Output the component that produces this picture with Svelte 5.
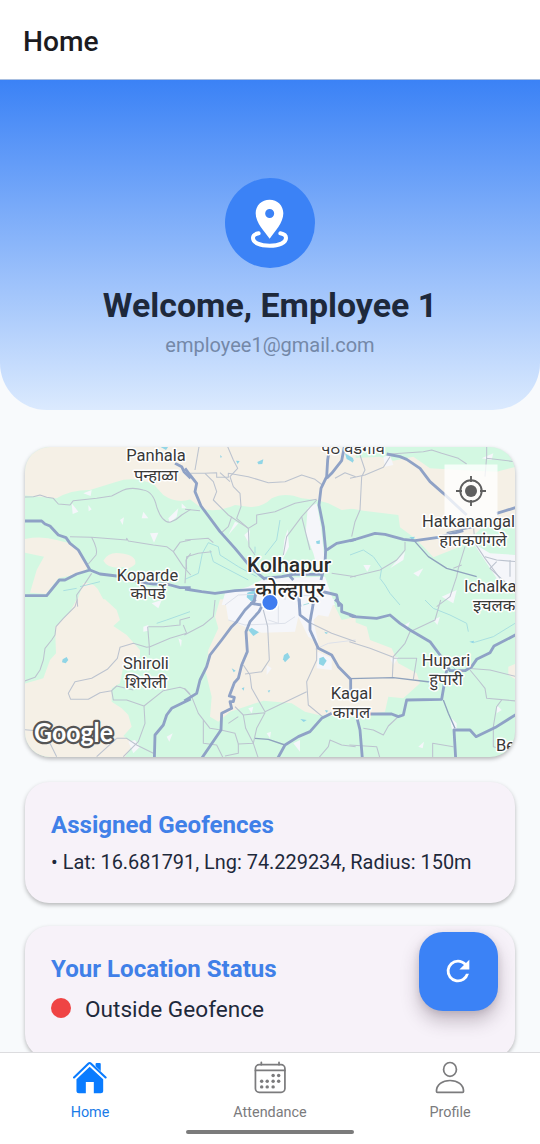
<script>
  const tabs = [
    { id: 'home', label: 'Home' },
    { id: 'attendance', label: 'Attendance' },
    { id: 'profile', label: 'Profile' }
  ];
  let active = $state('home');

  const geofences = [{ lat: '16.681791', lng: '74.229234', radius: 150 }];

  // The map is drawn as six tiles, each at three units per pixel.
  const tiles = [
    {
      x: 20, y: 440,
      land: [
        'M0 0H512V178Q470 192 430 165L400 132Q340 108 290 125L210 150Q150 150 110 175L0 165Z',
        'M0 300Q60 285 110 300L150 310Q190 340 205 380L190 398L115 415L78 462L30 458L50 390L72 350L0 335Z',
        'M250 362Q265 335 300 340Q350 345 346 372Q330 390 310 382Q265 388 250 362Z',
        'M190 430Q225 425 240 460L262 500H165Z'
      ],
      town: ['M155 190L175 215L158 222Z', 'M205 195L215 208L206 214Z', 'M300 240L312 232L308 255Z', 'M365 235L370 215L385 235Z', 'M390 280L415 278L402 308Z', 'M445 235L475 205L470 230L450 248Z', 'M485 190L500 205L485 205Z', 'M190 160L215 150L212 168Z'],
      water: ['M420 20H445L438 30Z'],
      stream: ['M130 452L170 445M180 440L240 425M350 415L372 432'],
      thin: [
        'M0 172L40 170L60 165L80 172L100 175L115 192L150 195L160 182L230 175L275 168L300 155Q330 138 370 150Q400 155 410 200Q425 247 450 247Q470 240 485 225L512 208',
        'M150 290L215 292L320 300V295L325 303L400 315L440 320L460 335L490 380L512 405',
        'M215 292Q235 330 228 345L205 372', 'M460 335L480 307L512 300', 'M512 340L498 360L500 388',
        'M173 500L170 465L195 430L215 400'
      ],
      thick: [
        'M0 243H65L75 252L90 258L115 285L138 293L150 310L175 330L210 390L240 402L290 408L370 428L400 432H440L480 443H512',
        'M0 467H80L118 420H135L170 402L210 390', 'M465 70L485 80L492 95L512 115'
      ]
    },
    {
      x: 185, y: 440,
      land: ['M-2 0H512V205L470 210L430 190L395 180L350 175Q300 155 260 175Q230 205 190 200L150 195Q90 220 50 205L-2 165Z'],
      town: ['M368 205L395 190L408 260L420 370L400 395L385 340L362 280Z', 'M298 300L308 268L312 320L292 360Z', 'M130 285L150 245L160 250Z', 'M120 460L190 440L240 415L420 410L450 495H110Z', 'M178 285L195 270L192 310Z'],
      water: ['M217 66L235 58L232 72L220 73Z', 'M153 62L164 63L158 72Z', 'M393 304L405 301L404 312L395 311Z', 'M480 40L505 55L500 65L485 57Z', 'M187 458L210 450V480L200 485L185 472Z', 'M105 45L111 50L107 54Z'],
      stream: ['M0 418L40 400L52 340L70 308L100 320L105 345L160 380L215 410', 'M75 330L85 365L190 420', 'M285 240L275 300L240 345', 'M210 320V340'],
      thin: [
        'M42 20L30 90', 'M128 20L145 60L158 85L135 110L145 140L165 160L168 200L155 235L190 265L192 320L210 345',
        'M5 100L60 100L95 98L95 112L130 112V100L190 110L250 128L300 125L350 105L390 118L412 135', 'M60 100L85 125L95 155L85 180L130 225L190 265L215 250V225L270 215L330 190L395 178',
        'M395 180L350 230L305 290L295 345', 'M0 208L45 212', 'M0 300L70 295L85 308', 'M140 230L130 260L110 278', 'M105 98L135 125', 'M0 430L5 350L40 340L80 335', 'M450 115L480 98L512 110', 'M440 400L512 410', 'M350 230L375 330'
      ],
      faint: ['M300 445V480M380 430V495M120 495L160 465L290 460L400 470'],
      thick: [
        'M0 85L15 105L35 130L30 155L48 198L105 275L150 325L200 385L240 418',
        'M435 15L428 60L425 110L408 145L402 195L415 260L422 330L420 370L408 420', 'M478 20L470 62L440 100L425 115', 'M425 330L455 310L512 298',
        'M235 415L290 410L325 403H415M310 403L325 420', 'M0 447L50 455L90 460L150 452L215 448L205 495', 'M405 453L455 465L462 500', 'M340 460L345 500'
      ]
    },
    {
      x: 350, y: 440,
      land: ['M0 55L90 50L130 62L190 50L240 85L330 90L440 95L500 80V225L400 260L330 320L250 352L225 325L195 295L150 262L145 225L40 212L0 205Z'],
      town: ['M100 50L120 45L130 75L105 80Z', 'M370 310L420 340L500 345V440L440 415Z', 'M120 385L165 335L160 360Z', 'M190 400L220 385L205 410Z', 'M40 375L62 375L52 395Z', 'M395 55L430 40L425 60Z', 'M275 470L320 450L310 490Z'],
      water: ['M0 50L12 60L8 68L0 60Z', 'M178 292L195 290L188 300Z'],
      stream: ['M0 345L40 330L70 350L95 385L90 415L105 435L120 460L150 495'],
      thin: [
        'M120 42L220 35L245 30L275 40L325 55L350 72', 'M410 20V55L495 65M410 50L405 110', 'M25 30L45 90L35 110L30 210L15 245L5 290', 'M0 115L45 105L100 82L120 50',
        'M0 412L90 390L140 360L165 330V305', 'M370 255L375 310L405 355L450 415', 'M345 320L325 385L320 410L300 470L260 500', 'M405 350L440 360L500 365', 'M440 365L420 385L470 430M480 360V410', 'M310 385L335 375'
      ],
      mid: ['M195 305L235 350L290 385L380 410', 'M290 278L370 262'],
      thick: ['M110 42L150 50L170 58L210 85L240 125L280 160L350 225', 'M0 303L75 280L105 283L160 298L195 302L265 292L340 272', 'M440 220L500 202']
    },
    {
      x: 20, y: 600,
      land: ['M170 -2H255L290 30L300 60L280 78L320 105L360 150V170L310 200L300 250L275 265V305L305 325L325 345L335 380L310 408L340 430L310 480H0V255L70 235L90 180L108 160L105 80L150 35Z'],
      town: ['M370 80L385 75V92L370 95Z', 'M395 10L425 0L415 25Z', 'M440 410L458 400L448 425Z', 'M325 425L345 420L360 440L340 460Z', 'M475 115L485 120L483 142Z'],
      water: ['M128 178L140 171L145 180L137 190L126 187Z'],
      stream: ['M410 70L440 60L510 35'],
      thin: [
        'M172 -2L165 20L130 55L108 80L105 105L95 120L75 145L70 180L60 210L45 232L0 248',
        'M385 80H430L480 75V60L510 52M490 75L500 100L450 115L390 140L380 142L340 130L300 142L292 175L262 208L215 235L165 245L145 280L152 298H205L240 278L275 272L290 258L340 270',
        'M383 80L388 140V165', 'M275 272L280 300H320L372 318L375 370L355 425L310 470', 'M372 318L430 272L480 262L495 267L510 282', 'M290 415H320L350 435L400 460', 'M0 388L50 392L90 430L110 470', 'M230 470L290 415'
      ],
      thick: ['M512 297L455 325L440 345L430 375L405 405L403 480']
    },
    {
      x: 185, y: 600,
      land: ['M105 -2L90 50L100 85L70 150L62 215L80 290L75 350L100 365L135 335L180 320L235 302L320 310L360 335L400 345L512 350V50L470 60L440 0Z'],
      town: ['M120 -2H450L430 50L400 45L385 60L400 130L370 110L340 50L330 95L230 98L190 85L130 60Z', 'M245 195L260 205L245 225Z', 'M325 430L345 420L345 455Z', 'M245 400L258 395L255 415Z', 'M398 155L440 175L440 210L395 205Z', 'M190 325L205 320L200 340Z'],
      water: ['M190 90L200 83L222 97L205 108Z', 'M297 165L308 158L315 172L300 187L294 178Z', 'M403 175L415 170L425 182L415 198L402 192Z', 'M140 205L152 212L146 217Z', 'M170 265L178 262L176 272Z', 'M346 357L365 360L356 366Z', 'M248 272L256 270L252 278Z', 'M418 95L430 98L423 102Z', 'M420 330L430 332L424 338Z'],
      stream: ['M355 15L372 10'],
      thin: [
        'M235 30L248 80L253 180L230 215L180 222', 'M175 195L195 225L200 265L240 335L365 275', 'M395 130V180L365 245L370 315L415 352', 'M150 320L175 345L240 338L215 385L205 430L220 475', 'M175 345L182 385L205 430L160 432L150 400L108 390',
        'M-2 265L20 290L40 340L75 385L108 390', 'M55 360L55 430L95 435L115 475', 'M375 68L440 100L512 125', 'M400 475L430 440L435 420L470 435L512 440', 'M-2 105L55 75L85 50L90 0', 'M120 468L160 460V432', 'M130 370L160 350'
      ],
      faint: ['M130 60L180 75L300 70L330 50M280 0V70L250 60', 'M390 148L430 130L512 120'],
      mid: ['M210 415L250 418L300 435'],
      thick: [
        'M212 -2L180 30L155 65L140 80L110 120L75 165L65 200L45 240L35 280L-2 303', 'M230 20L222 35L195 65L183 95L187 155L170 195L160 235L148 248L133 288L148 292L145 305H135L140 325L110 340L108 390L50 475', 'M195 10L230 15',
        'M342 -2L345 45L375 68V90L400 145L440 165L460 200L497 238V290', 'M385 10L375 65', 'M440 340L410 355L375 395L340 410L300 435L278 475', 'M450 -2L470 15V35L512 50'
      ]
    },
    {
      x: 350, y: 600,
      land: ['M-2 60L50 80L60 120L125 145L145 190L200 220L210 250L160 295L115 290L105 335L-2 350Z', 'M475 200L500 190V240L475 225Z'],
      town: ['M155 80L180 65L170 90Z', 'M205 440L222 425L218 445Z', 'M300 350L320 370L320 395L305 385Z', 'M250 60L270 50L262 75Z', 'M120 175L145 170L130 195Z', 'M440 315L455 330L440 340Z'],
      water: ['M358 125L372 122L370 130Z'],
      stream: ['M225 0L250 25L300 45L350 70L355 95', 'M370 128L430 110L495 70', 'M300 190L330 225'],
      thin: [
        'M-2 125L60 145L130 172M272 0L255 60L180 95L165 130L130 170L127 233', 'M130 175H200L190 238', 'M350 205L420 210L500 230', 'M360 210L385 240L405 265L410 295L500 303', 'M455 300L440 320L430 380V440L500 460', 'M40 385L70 390L100 405L115 378L150 345', 'M248 475V430L310 440', 'M-2 435L80 440L90 475'
      ],
      mid: ['M-2 236L130 233L240 246', 'M280 300L295 340L315 385'],
      thick: [
        'M-2 45L10 50L80 55L120 45L150 70L180 90L240 125L270 165L300 212H345L365 200L380 178L420 158L432 138L500 103', 'M290 210L275 298L170 300L160 345L145 350L125 342H60L-2 338', 'M15 330L30 390L37 475', 'M500 342L440 380L378 410L360 390H312L317 475'
      ]
    }
  ];
  const layers = ['land', 'town', 'stream', 'water', 'faint', 'thin', 'mid', 'thick'];

  const labels = [
    { x: 156, y: 461, t: 'Panhala', s: 16.5 },
    { x: 156, y: 481, t: 'पन्हाळा', s: 16.5 },
    { x: 353, y: 454, t: 'पेठ वडगाव', s: 16.5 },
    { x: 147.500, y: 581, t: 'Koparde', s: 16.5 },
    { x: 148, y: 599, t: 'कोपर्डे', s: 16.5 },
    { x: 289, y: 572, t: 'Kolhapur', s: 21, big: true },
    { x: 290, y: 597, t: 'कोल्हापूर', s: 21, big: true },
    { x: 422, y: 527, t: 'Hatkanangal', s: 16.5, start: true },
    { x: 473, y: 546, t: 'हातकणंगले', s: 16.5 },
    { x: 464, y: 592, t: 'Ichalka', s: 16.5, start: true },
    { x: 473, y: 611, t: 'इचलक', s: 16.5, start: true },
    { x: 146, y: 669, t: 'Shiroli', s: 16.5 },
    { x: 146, y: 688, t: 'शिरोली', s: 16.5 },
    { x: 446, y: 666, t: 'Hupari', s: 16.5 },
    { x: 446, y: 685, t: 'हुपारी', s: 16.5 },
    { x: 351.500, y: 699, t: 'Kagal', s: 16.5 },
    { x: 351.500, y: 718, t: 'कागल', s: 16.5 },
    { x: 496, y: 751, t: 'Be', s: 16.5, start: true }
  ];
</script>

<div class="app">
  <header class="bar"><h1>Home</h1></header>

  <main class="content">
    <section class="hero">
      <div class="badge">
        <svg viewBox="45 39 270 270" width="90" height="90">
          <path class="ring" d="M146 205Q129 208 129 219C129 233 150 242 179 242S228 233 228 219Q228 208 211 205" />
          <path class="pin" fill-rule="evenodd" d="M179 104C155 104 137 121 137 145C137 174 164 200 179 221C194 200 220 174 220 145C220 121 202 104 179 104ZM179 132A13.500 13.500 0 1 1 179 159A13.500 13.500 0 1 1 179 132Z" />
        </svg>
      </div>
      <h2>Welcome, Employee 1</h2>
      <p>employee1@gmail.com</p>
    </section>

    <div class="stack">
      <section class="map">
        <svg viewBox="25 447 490 310" width="490" height="310">
          {#each layers as layer}
            {#each tiles as tile}
              <g class={layer} transform={`translate(${tile.x} ${tile.y}) scale(.33333)`}>
                {#each tile[layer] ?? [] as d}<path {d} />{/each}
              </g>
            {/each}
          {/each}
          <rect class="locate" x="444.500" y="464.500" width="53" height="53" />
          {#each labels as l}
            <text class="place" class:big={l.big} x={l.x} y={l.y} font-size={l.s} text-anchor={l.start ? 'start' : 'middle'}>{l.t}</text>
          {/each}
          <g class="target">
            <circle cx="471" cy="491" r="10.700" />
            <path d="M471 476V482M471 500V506M456 491H462M480 491H486" />
            <circle class="core" cx="471" cy="491" r="6" />
          </g>
          <circle class="me" cx="270" cy="602.500" r="8.300" />
          <text class="google" x="34" y="741.500" textLength="79" lengthAdjust="spacingAndGlyphs">Google</text>
        </svg>
      </section>

      <section class="card">
        <h3>Assigned Geofences</h3>
        {#each geofences as g}
          <p class="fence">• Lat: {g.lat}, Lng: {g.lng}, Radius: {g.radius}m</p>
        {/each}
      </section>

      <section class="card status">
        <h3>Your Location Status</h3>
        <p class="state"><span class="dot"></span>Outside Geofence</p>
      </section>
    </div>

    <button class="fab" aria-label="Refresh">
      <svg viewBox="0 0 24 24" width="34" height="34"><path d="M17.650 6.350C16.200 4.900 14.210 4 12 4a8 8 0 1 0 7.730 10h-2.080A6 6 0 1 1 12 6c1.660 0 3.140.69 4.220 1.780L13 11h7V4l-2.350 2.350z" /></svg>
    </button>
  </main>

  <nav class="tabs">
    {#each tabs as tab}
      <button class="tab" class:active={active === tab.id} onclick={() => (active = tab.id)}>
        {#if tab.id === 'home'}
          <svg viewBox="212 48 98 98" width="34" height="33" preserveAspectRatio="none">
            <path class="fill" d="M260 65L299 102V138Q299 144 292 144H272V110H249V144H229Q222 144 222 138V102Z" />
            <path class="fill" d="M277 57Q277 54 280 54H289Q292 54 292 57V80L277 66Z" />
            <path class="gap" d="M215 99L256 59Q260 55 264 59L306 99" />
            <path class="roof" d="M215 97L256 56Q260 52 264 56L306 97" />
          </svg>
        {:else if tab.id === 'attendance'}
          <svg viewBox="734 48 98 98" width="34" height="33" preserveAspectRatio="none">
            <rect class="line" x="741" y="59" width="85" height="82" rx="11" />
            <path class="line" d="M741 76H826M758 52V59M809 52V59" />
            {#each [[792, 91], [808, 91], [759, 108], [775, 108], [792, 108], [808, 108], [759, 125], [775, 125], [792, 125]] as [cx, cy]}
              <circle class="fill" {cx} {cy} r="5" />
            {/each}
          </svg>
        {:else}
          <svg viewBox="1257 48 98 98" width="34" height="33" preserveAspectRatio="none">
            <ellipse class="line" cx="1306" cy="73" rx="18.500" ry="20.500" />
            <path class="line" d="M1267 138C1267 118 1284 106 1306 106S1345 118 1345 138Q1345 141 1342 141H1270Q1267 141 1267 138Z" />
          </svg>
        {/if}
        <span>{tab.label}</span>
      </button>
    {/each}
    <i class="handle"></i>
  </nav>
</div>

<style>
  :global(body) { margin: 0; background: #fff; }
  .app {
    width: 540px; height: 1144px; display: flex; flex-direction: column; overflow: hidden;
    font-family: Roboto, 'Noto Sans', sans-serif; background: #f8fafc;
  }
  h1, h2, h3, p { margin: 0; }
  button { border: 0; padding: 0; background: none; font: inherit; }
  svg { display: block; }
  .bar {
    flex: none; box-sizing: border-box; height: 80px; padding: 3px 23px 0; display: flex; align-items: center;
    background: #fff; border-bottom: 1px solid #a9bfe0;
  }
  h1 { font-size: 28.200px; font-weight: 500; color: #1c1b1f; }
  .content { position: relative; flex: 1; min-height: 0; overflow: hidden; }
  .hero {
    box-sizing: border-box; height: 330px; padding-top: 98px; display: flex; flex-direction: column; align-items: center;
    border-radius: 0 0 47px 47px; background: linear-gradient(#3b82f6, #dbeafe);
  }
  .badge { width: 90px; height: 90px; border-radius: 50%; background: #3b82f6; }
  .pin { fill: #fff; }
  .ring { fill: none; stroke: #fff; stroke-width: 12; stroke-linecap: round; }
  h2 { margin-top: 18px; font-size: 33.900px; line-height: 40px; font-weight: 700; color: #1e293b; }
  .hero p { margin-top: 7px; font-size: 20px; line-height: 24px; color: #7488a8; }
  .stack { display: flex; flex-direction: column; gap: 23px; padding: 37px 25px 0; }
  .map {
    height: 310px; margin-bottom: 2px; border-radius: 25px; overflow: hidden; background: #d3f8e2;
    box-shadow: 0 2px 4px rgba(0, 0, 0, .27);
  }
  .land path { fill: #f5f0e6; }
  .town path { fill: #f5f6fa; }
  .water path { fill: #90d5e6; }
  .stream path { fill: none; stroke: #a9dfe0; stroke-width: 3; }
  .thin path, .mid path, .thick path, .faint path { fill: none; stroke-linejoin: round; }
  .faint path { stroke: #dde1ea; stroke-width: 3; }
  .thin path { stroke: #bcc3cf; stroke-width: 3.200; }
  .mid path { stroke: #8fa2bd; stroke-width: 4; }
  .thick path { stroke: #8fa2c6; stroke-width: 8.500; }
  .place {
    font-family: Roboto, 'Noto Sans Devanagari', 'Noto Sans', sans-serif; fill: #383838; paint-order: stroke;
    stroke: #fff; stroke-width: 3px; stroke-linejoin: round;
  }
  .big { font-weight: 500; fill: #2a2a2a; }
  .locate { fill: rgba(255, 255, 255, .78); }
  .target { fill: none; stroke: #5f5f5f; stroke-width: 1.900; }
  .target .core { fill: #5f5f5f; stroke: none; }
  .me { fill: #3f7cf0; stroke: #fff; stroke-width: 1.500; }
  .google {
    font-family: Lato, sans-serif; font-size: 27px; font-weight: 700; fill: #fff; paint-order: stroke;
    stroke: #555; stroke-width: 4.500px; stroke-linejoin: round;
  }
  .card {
    box-sizing: border-box; height: 121px; padding: 28px 26px; border-radius: 24px; background: #f7f2f9;
    box-shadow: 0 2px 4px rgba(0, 0, 0, .27);
  }
  .status { height: 132px; }
  h3 { font-size: 24.100px; line-height: 30px; font-weight: 700; color: #4080e8; }
  .fence { margin-top: 10px; font-size: 19.920px; line-height: 26px; color: #1e293b; white-space: nowrap; }
  .state { display: flex; align-items: center; gap: 14px; margin-top: 11px; font-size: 22.600px; line-height: 30px; color: #1e293b; }
  .dot { width: 20px; height: 20px; margin-top: -4px; border-radius: 50%; background: #ef4444; }
  .fab {
    position: absolute; left: 419px; top: 852px; width: 79px; height: 79px; display: grid; place-items: center;
    border-radius: 24px; background: #3b82f6; box-shadow: 0 10px 18px rgba(60, 40, 60, .28), 0 2px 7px rgba(60, 40, 60, .12);
  }
  .fab svg { margin: -2px 0 0 -1px; }
  .fab path { fill: #fff; }
  .tabs {
    position: relative; flex: none; box-sizing: border-box; height: 92px; display: flex;
    background: #fff; border-top: 1px solid #dcdcdf;
  }
  .tab { flex: 1; display: flex; flex-direction: column; align-items: center; padding-top: 8px; color: #7b7b7d; }
  .tab span { margin-top: 10px; font-size: 14.400px; line-height: 18px; }
  .active { color: #0a7cff; }
  .active span { color: #1a7be8; }
  .fill { fill: currentColor; }
  .line, .roof, .gap { fill: none; stroke: currentColor; stroke-width: 5; stroke-linecap: round; stroke-linejoin: round; }
  .roof { stroke-width: 6; }
  .gap { stroke: #fff; stroke-width: 11; }
  .handle { position: absolute; left: 186px; bottom: 10px; width: 168px; height: 4px; border-radius: 2px; background: #7b7b7b; }
</style>
